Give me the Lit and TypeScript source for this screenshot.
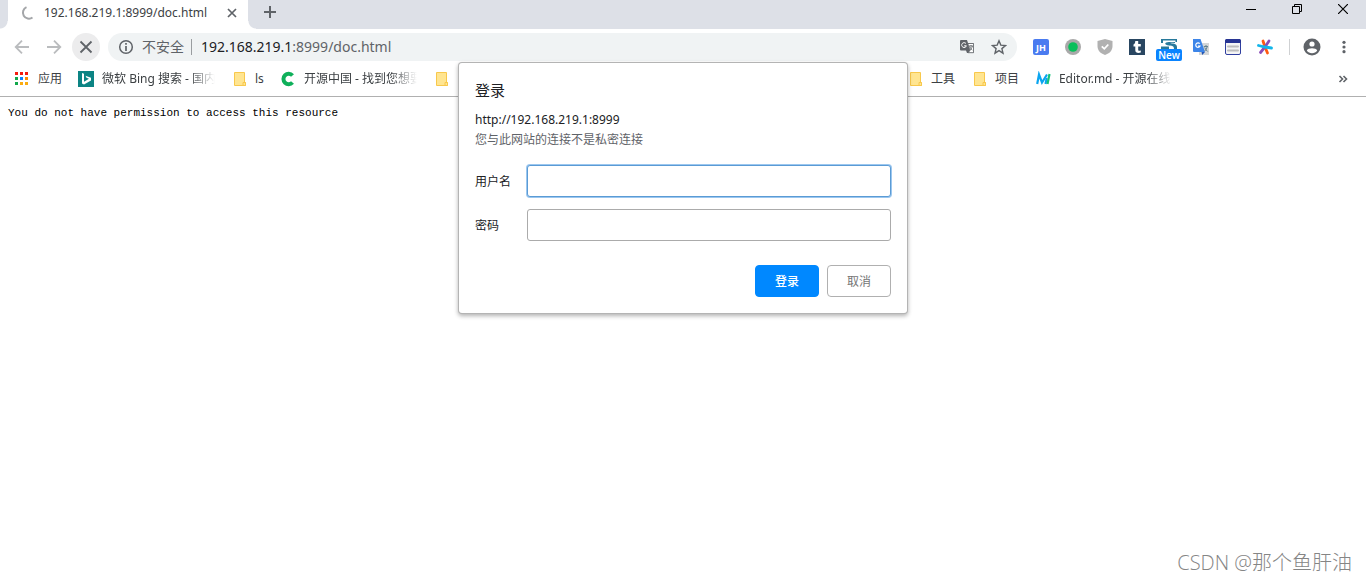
import { LitElement, html, css, svg } from "lit";
import { customElement } from "lit/decorators.js";

const folder = html`<svg class="i16" viewBox="0 0 16 16"><path d="M3.5 1.500h10v10h1v3h-11z" fill="#ffe591" stroke="#f8c84c"/><path d="M12 11.500h2.500v3H12z" fill="#ffe591" stroke="#f8c84c"/></svg>`;

const dotColors = ["#f41c0e", "#f41c0e", "#f41c0e", "#12a84b", "#0a84ff", "#fb8c00", "#12a84b", "#fbab10", "#fbab10"];
const gridDots = dotColors.map(
  (color, i) => svg`<rect x=${1 + (i % 3) * 5} y=${1 + Math.floor(i / 3) * 5} width="3" height="3" fill=${color} />`
);

const translateMono = html`<svg class="i16" viewBox="0 0 16 16">
  <path d="M2 1h6l1 3h5.500v10H8l-1-2.500H2Q1 11.500 1 10.500V2q0-1 1-1z" fill="#5f6368"/>
  <path d="M8.800 4.500h5.700v9.200H9l2-2.200z" fill="#fff" stroke="#5f6368" stroke-width=".8"/>
  <path d="M7 4.600a2.400 2.400 0 1 0 .4 2.200H5.200" fill="none" stroke="#fff" stroke-width="1"/>
  <path d="M10 7h4M12 6v1m1.300 0c-.3 2-1.300 3.300-2.600 4M10.700 7.500c.4 1.500 1.300 2.600 2.600 3.500" fill="none" stroke="#5f6368" stroke-width=".9"/></svg>`;

const extensions = [
  { name: "JH", icon: html`<svg class="i16" viewBox="0 0 16 16"><rect width="16" height="16" rx="2" fill="#4a7bf0"/><text x="8" y="11.500" text-anchor="middle" class="jh">JH</text></svg>` },
  { name: "Status", icon: html`<svg class="i16" viewBox="0 0 16 16"><circle cx="8" cy="8" r="8" fill="#a9a9a9"/><circle cx="8" cy="8" r="4.800" fill="#0abf5b"/></svg>` },
  { name: "Shield", icon: html`<svg class="i16" viewBox="0 0 16 16"><path d="M8 0l7.500 2v5c0 4.500-3 7.500-7.500 9C3.500 14.500.5 11.500.5 7V2z" fill="#b1b1b1"/><path d="M4.800 7.300l2.500 2.500 4-4.300" fill="none" stroke="#fff" stroke-width="1.800"/></svg>` },
  { name: "Tumblr", icon: html`<svg class="i16" viewBox="0 0 16 16"><rect width="16" height="16" fill="#294661"/><path d="M6.300 2h2.900v3h2.600v2.400H9.200v3.300c0 1.400 1 1.300 2.600.7v2.200c-2.800 1.100-5.500.3-5.500-2.300V7.400H4.500V5.500c1.200-.4 1.700-1.900 1.800-3.500z" fill="#fff"/></svg>` },
  { name: "Screen", badge: "New", icon: html`<svg class="i16" viewBox="0 0 16 16"><path d="M0 0h16v3h-1.500V1.500H2V4H0z" fill="#28799b"/><path d="M14 3H8C3 3 3 6 8 6.500c4 .3 5 1 5 3.500h3V8c0-3-3-3.500-6-3.800C8.500 4 9 3.500 14 4z" fill="#28799b"/><path d="M0 7.500h8V10H0z" fill="#28799b"/></svg>` },
  { name: "Translate", icon: html`<svg class="i16" viewBox="0 0 16 16"><rect x="6" y="4" width="10" height="12" fill="#d5d7d8"/><path d="M0 0h7.500l4.500 13H1q-1 0-1-1z" fill="#3d85e8"/><path d="M8.500 13H12l-2.800 3z" fill="#2456b4"/><path d="M6.700 4.700A2.200 2.200 0 1 0 7 7H5" fill="none" stroke="#fff" stroke-width="1.200"/><path d="M10.800 7.500H15M13 6v1.500m1.300 0q-.6 3-2.600 4.500m0-3.500q1 2.500 3 4" fill="none" stroke="#65838f" stroke-width="1"/></svg>` },
  { name: "Notes", icon: html`<svg class="i16" viewBox="0 0 16 16"><rect x=".5" y=".5" width="15" height="15" rx="1.500" fill="#f5f5f5" stroke="#303f9f"/><path d="M0 1.500Q0 0 1.500 0h13Q16 0 16 1.500V4H0z" fill="#283593"/><path d="M3 7.500h10M3 11.500h10" stroke="#bdbdbd" stroke-width="2" stroke-linecap="round"/></svg>` },
  { name: "Star", icon: html`<svg class="i16" viewBox="0 0 16 16" fill="none" stroke-width="2.800" stroke-linecap="round"><path d="M6 2l2 6 2.500 6" stroke="#ff5a12"/><path d="M12 2L8 8l-4.500 5.500" stroke="#8b4db8"/><path d="M1.500 6.500L8 8l6.500 1" stroke="#12b5ea"/></svg>` },
];

@customElement("app-root")
export class AppRoot extends LitElement {
  static styles = css`
    :host { display: flex; flex-direction: column; position: relative; min-height: 100vh; background: #fff; color: #3c4043;
      font: 12px/16px "Noto Sans", "Noto Sans CJK SC", sans-serif; overflow: hidden; }
    * { box-sizing: border-box; }
    button { border: 0; padding: 0; margin: 0; background: none; font: inherit; color: inherit; display: grid; place-items: center; }
    a { color: inherit; text-decoration: none; }
    svg { display: block; flex: none; }
    .i16 { width: 16px; height: 16px; }
    .jh { font: bold 9px "Open Sans", sans-serif; fill: #fff; }
    .strip { display: flex; height: 29px; background: #dde0e7; padding-left: 8px; }
    .tab { position: relative; display: flex; align-items: center; width: 240px; height: 29px; background: #fff; padding: 0 8px 4px 12px; gap: 8px; }
    .tab::before, .tab::after { content: ""; position: absolute; bottom: 0; width: 8px; height: 8px; }
    .tab::before { right: 100%; background: radial-gradient(circle at 0 0, #dde0e7 7px, #fff 8px); }
    .tab::after { left: 100%; background: radial-gradient(circle at 100% 0, #dde0e7 7px, #fff 8px); }
    .title { flex: 1; white-space: nowrap; }
    .newtab { width: 28px; height: 24px; margin-left: 8px; }
    .controls { display: flex; margin-left: auto; color: #000; }
    .controls button { width: 46px; height: 18px; }
    .toolbar { display: flex; align-items: center; height: 36px; padding: 0 8px; color: #5f6368; }
    .nav { display: flex; gap: 4px; margin-right: 8px; }
    .round { width: 28px; height: 28px; border-radius: 50%; }
    .nav .off { color: #babcbe; }
    .nav .active { background: #ececed; }
    .account { display: flex; gap: 4px; }
    .pill { flex: 1; display: flex; align-items: center; height: 28px; border-radius: 14px; background: #f0f3f4; padding: 0 10px; gap: 8px; font-size: 14px; line-height: 20px; }
    .pill .warn { border-right: 1px solid #9a9da0; padding-right: 7px; margin-right: 1px; line-height: 16px; }
    .address { flex: 1; min-width: 0; display: flex; }
    .host { color: #202124; }
    .pill button { width: 16px; height: 16px; margin-left: 8px; }
    .exts { display: flex; margin-left: 8px; }
    .exts button { position: relative; width: 32px; height: 28px; }
    .badge { position: absolute; left: 3px; bottom: 0; width: 26px; height: 12px; border-radius: 2px; background: #0a84ff; color: #fff; font: 600 10px/12px "Open Sans", sans-serif; }
    .sep { width: 1px; height: 16px; background: #cfd1d3; margin: 0 8px; }
    .marks { display: flex; align-items: center; height: 32px; border-bottom: 1px solid #b0b0b0; padding: 0 18px 3px 14px; gap: 16px; white-space: nowrap; }
    .mark { display: flex; align-items: center; gap: 8px; flex: none; }
    .fade { width: 113px; -webkit-mask-image: linear-gradient(90deg, #000 88px, transparent); mask-image: linear-gradient(90deg, #000 88px, transparent); }
    .covered { width: 426px; }
    .more { margin-left: auto; }
    .message { margin: 0; padding: 8px; color: #000; font: 11px/16px "Liberation Mono", monospace; }
    .dialog { position: absolute; top: 63px; left: 50%; transform: translateX(-50%); width: 448px; padding: 16px; background: #fff; border-radius: 3px;
      box-shadow: 0 0 0 1px #b4b4b4, 0 2px 4px 1px rgba(0, 0, 0, .3); color: #202124; }
    .dialog h1 { margin: 0; font-size: 15px; line-height: 22px; font-weight: 400; }
    .dialog p { margin: 0; line-height: 20px; }
    .dialog .origin { padding-top: 9px; }
    .notice { color: #5f6368; }
    .fields { display: grid; grid-template-columns: 44px 1fr; gap: 12px 8px; align-items: center; padding: 15px 0 24px; }
    .fields label { padding-top: 2px; }
    .fields input { width: 100%; height: 32px; border: 1px solid #ababab; border-radius: 3px; padding: 0 8px; outline: none; font: inherit; background: #fff; }
    .fields .focused { border-color: #5b9bd5; box-shadow: 0 0 0 1px #9cc7ef; }
    .actions { display: flex; justify-content: flex-end; gap: 8px; }
    .actions button { width: 64px; height: 32px; padding-top: 2px; border-radius: 4px; border: 1px solid #b0b0b0; color: #757575; }
    .actions .primary { background: #0088ff; border-color: #0088ff; color: #fff; font-weight: 500; }
    .watermark { position: absolute; right: 14px; bottom: 4px; font: 300 20px/28px "Open Sans", "Noto Sans CJK SC", sans-serif; color: #858585; }
  `;

  render() {
    return html`
      <div class="strip">
        <div class="tab">
          <svg class="i16" viewBox="0 0 16 16"><path d="M6.500 2.200A6 6 0 1 0 12.500 12.500" fill="none" stroke="#a4a6a9" stroke-width="2"/></svg>
          <span class="title">192.168.219.1:8999/doc.html</span>
          <button aria-label="Close tab"><svg class="i16" viewBox="0 0 16 16"><path d="M4 4l8 8M12 4l-8 8" stroke="#5f6368" stroke-width="1.700"/></svg></button>
        </div>
        <button class="newtab" aria-label="New tab"><svg class="i16" viewBox="0 0 16 16"><path d="M8 2v12M2 8h12" stroke="#5f6368" stroke-width="2"/></svg></button>
        <div class="controls">
          <button aria-label="Minimize"><svg width="10" height="10"><path d="M0 5.500h10" stroke="#000"/></svg></button>
          <button aria-label="Restore"><svg width="10" height="10" fill="none" stroke="#000"><path d="M.5 2.500h7v7h-7zM2.500 2.500v-2h7v7h-2"/></svg></button>
          <button aria-label="Close"><svg width="10" height="10"><path d="M0 0l10 10M10 0L0 10" stroke="#000" stroke-width="1.200"/></svg></button>
        </div>
      </div>
      <div class="toolbar">
        <div class="nav">
          <button class="round off" aria-label="Back"><svg class="i16" viewBox="0 0 16 16" fill="none" stroke="currentColor" stroke-width="1.800"><path d="M15 8H2M8 1.700L1.700 8 8 14.300"/></svg></button>
          <button class="round off" aria-label="Forward"><svg class="i16" viewBox="0 0 16 16" fill="none" stroke="currentColor" stroke-width="1.800"><path d="M1 8h13M8 1.700L14.300 8 8 14.300"/></svg></button>
          <button class="round active" aria-label="Stop"><svg class="i16" viewBox="0 0 16 16"><path d="M2.500 2.500l11 11M13.500 2.500l-11 11" stroke="#5f6368" stroke-width="1.800"/></svg></button>
        </div>
        <div class="pill">
          <svg class="i16" viewBox="0 0 16 16"><circle cx="8" cy="8" r="6.300" fill="none" stroke="#5f6368" stroke-width="1.500"/><path d="M8 7v5M8 4v1.700" stroke="#5f6368" stroke-width="1.700"/></svg>
          <span class="warn">不安全</span>
          <div class="address"><span class="host">192.168.219.1</span><span>:8999/doc.html</span></div>
          <button aria-label="Translate page">${translateMono}</button>
          <button class="star" aria-label="Bookmark"><svg class="i16" viewBox="0 0 16 16"><path d="M8 1.800l1.800 4.300 4.700.4-3.600 3.100 1.100 4.600L8 11.700l-4 2.500 1.100-4.600-3.600-3.100 4.700-.4z" fill="none" stroke="#5f6368" stroke-width="1.400"/></svg></button>
        </div>
        <div class="exts">
          ${extensions.map((e) => html`<button aria-label=${e.name}>${e.icon}${e.badge ? html`<span class="badge">${e.badge}</span>` : ""}</button>`)}
        </div>
        <div class="sep"></div>
        <div class="account">
          <button class="round" aria-label="Profile"><svg width="18" height="18" viewBox="0 0 18 18"><circle cx="9" cy="9" r="8.500" fill="#5f6368"/><circle cx="9" cy="6" r="2.600" fill="#fff"/><path d="M3.800 12.500c1-3 9.400-3 10.400 0C12 16 6 16 3.800 12.500z" fill="#fff"/></svg></button>
          <button class="round" aria-label="Menu"><svg class="i16" viewBox="0 0 16 16" fill="#5f6368"><circle cx="8" cy="3.300" r="1.600"/><circle cx="8" cy="8" r="1.600"/><circle cx="8" cy="12.700" r="1.600"/></svg></button>
        </div>
      </div>
      <nav class="marks">
        <a class="mark" href="#"><svg class="i16" viewBox="0 0 16 16">${gridDots}</svg>应用</a>
        <a class="mark" href="#"><svg class="i16" viewBox="0 0 16 16"><rect width="16" height="16" fill="#0c8484"/><path d="M4 2l2 .8v8l5-3-2.500-1L7.500 4.800 13 6.700v2.800L6 13.600l-2-1.200z" fill="#fff"/></svg><span class="fade">微软 Bing 搜索 - 国内</span></a>
        <a class="mark" href="#">${folder}ls</a>
        <a class="mark" href="#"><svg class="i16" viewBox="0 0 16 16"><path d="M12.500 11.500A5.200 5.200 0 1 1 12.500 4.500" fill="none" stroke="#0fb05a" stroke-width="4"/></svg><span class="fade">开源中国 - 找到您想要</span></a>
        <a class="mark" href="#" aria-label="Folder">${folder}</a>
        <div class="covered"></div>
        <a class="mark" href="#">${folder}工具</a>
        <a class="mark" href="#">${folder}项目</a>
        <a class="mark" href="#"><svg class="i16" viewBox="0 0 16 16" fill="none" stroke-width="2.200"><path d="M2.200 13L4 3.500 7 11.500 12 3.500" stroke="#0aa5f0"/><path d="M10.500 13l1.200-6" stroke="#0aa5f0"/><path d="M14.500 3l-2 10" stroke="#13c27b"/></svg><span class="fade">Editor.md - 开源在线</span></a>
        <button class="more" aria-label="More bookmarks"><svg width="10" height="16" viewBox="0 0 10 16" fill="none" stroke="#5f6368" stroke-width="1.600"><path d="M1.500 5l3 3-3 3M5.500 5l3 3-3 3"/></svg></button>
      </nav>
      <pre class="message">You do not have permission to access this resource</pre>
      <form class="dialog" role="dialog" aria-labelledby="heading" @submit=${(e: Event) => e.preventDefault()}>
        <h1 id="heading">登录</h1>
        <p class="origin">http://192.168.219.1:8999</p>
        <p class="notice">您与此网站的连接不是私密连接</p>
        <div class="fields">
          <label for="user">用户名</label><input id="user" class="focused" type="text" />
          <label for="pass">密码</label><input id="pass" type="password" />
        </div>
        <div class="actions"><button class="primary" type="submit">登录</button><button type="button">取消</button></div>
      </form>
      <div class="watermark">CSDN @那个鱼肝油</div>
    `;
  }
}
